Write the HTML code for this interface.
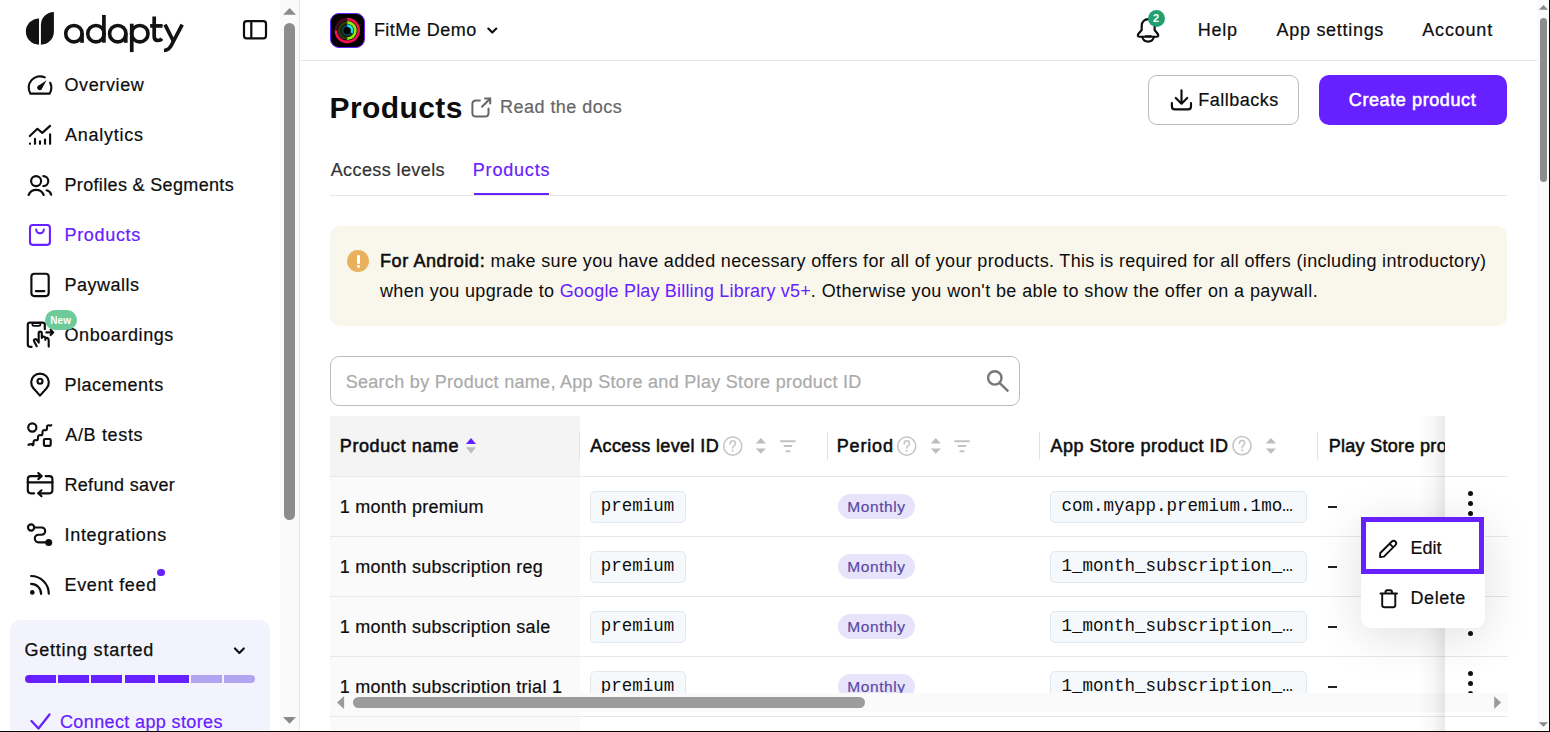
<!DOCTYPE html>
<html><head><meta charset="utf-8"><style>
html,body{margin:0;padding:0;}
body{width:1550px;height:732px;overflow:hidden;position:relative;background:#fff;font-family:"Liberation Sans",sans-serif;}
.t{position:absolute;white-space:nowrap;}
svg{position:absolute;overflow:visible;}
</style></head><body>

<div style="position:absolute;left:280px;top:0px;width:19px;height:731px;background:#fafafa;"></div>
<div style="position:absolute;left:299px;top:0px;width:1px;height:731px;background:#e6e6e6;"></div>
<div style="position:absolute;left:284px;top:23px;width:11px;height:497px;background:#8c8c8c;border-radius:5.5px;"></div>
<div style="position:absolute;left:10px;top:620px;width:260px;height:110px;background:#f3f3fd;border-radius:10px 10px 0 0;"></div>
<div style="position:absolute;left:25.2px;top:675px;width:30.5px;height:8px;background:#6720ff;border-radius:4px 0 0 4px;"></div>
<div style="position:absolute;left:58.1px;top:675px;width:30.7px;height:8px;background:#6720ff;"></div>
<div style="position:absolute;left:91.2px;top:675px;width:30.7px;height:8px;background:#6720ff;"></div>
<div style="position:absolute;left:125px;top:675px;width:29.8px;height:8px;background:#6720ff;"></div>
<div style="position:absolute;left:157.9px;top:675px;width:30.8px;height:8px;background:#6720ff;"></div>
<div style="position:absolute;left:191px;top:675px;width:30.8px;height:8px;background:#b1a5f2;"></div>
<div style="position:absolute;left:224.1px;top:675px;width:31.0px;height:8px;background:#b1a5f2;border-radius:0 4px 4px 0;"></div>
<div class="t" style="left:64.50px;top:75.56px;font-size:18px;line-height:18px;font-weight:400;color:#0d0d0d;letter-spacing:0.62px;font-family:'Liberation Sans';-webkit-text-stroke-width:0.2px;">Overview</div>
<div class="t" style="left:65.00px;top:125.56px;font-size:18px;line-height:18px;font-weight:400;color:#0d0d0d;letter-spacing:0.74px;font-family:'Liberation Sans';-webkit-text-stroke-width:0.2px;">Analytics</div>
<div class="t" style="left:64.50px;top:175.56px;font-size:18px;line-height:18px;font-weight:400;color:#0d0d0d;letter-spacing:0.34px;font-family:'Liberation Sans';-webkit-text-stroke-width:0.2px;">Profiles &amp; Segments</div>
<div class="t" style="left:64.50px;top:225.56px;font-size:18px;line-height:18px;font-weight:400;color:#6720ff;letter-spacing:0.68px;font-family:'Liberation Sans';-webkit-text-stroke-width:0.2px;">Products</div>
<div class="t" style="left:64.50px;top:275.56px;font-size:18px;line-height:18px;font-weight:400;color:#0d0d0d;letter-spacing:0.49px;font-family:'Liberation Sans';-webkit-text-stroke-width:0.2px;">Paywalls</div>
<div class="t" style="left:64.50px;top:325.56px;font-size:18px;line-height:18px;font-weight:400;color:#0d0d0d;letter-spacing:0.58px;font-family:'Liberation Sans';-webkit-text-stroke-width:0.2px;">Onboardings</div>
<div class="t" style="left:64.50px;top:375.56px;font-size:18px;line-height:18px;font-weight:400;color:#0d0d0d;letter-spacing:0.51px;font-family:'Liberation Sans';-webkit-text-stroke-width:0.2px;">Placements</div>
<div class="t" style="left:65.30px;top:425.56px;font-size:18px;line-height:18px;font-weight:400;color:#0d0d0d;letter-spacing:0.66px;font-family:'Liberation Sans';-webkit-text-stroke-width:0.2px;">A/B tests</div>
<div class="t" style="left:64.50px;top:475.56px;font-size:18px;line-height:18px;font-weight:400;color:#0d0d0d;letter-spacing:0.3px;font-family:'Liberation Sans';-webkit-text-stroke-width:0.2px;">Refund saver</div>
<div class="t" style="left:64.50px;top:525.56px;font-size:18px;line-height:18px;font-weight:400;color:#0d0d0d;letter-spacing:0.7px;font-family:'Liberation Sans';-webkit-text-stroke-width:0.2px;">Integrations</div>
<div class="t" style="left:64.50px;top:575.56px;font-size:18px;line-height:18px;font-weight:400;color:#0d0d0d;letter-spacing:0.62px;font-family:'Liberation Sans';-webkit-text-stroke-width:0.2px;">Event feed</div>
<div class="t" style="left:24.50px;top:640.86px;font-size:18px;line-height:18px;font-weight:400;color:#0d0d0d;letter-spacing:0.76px;font-family:'Liberation Sans';-webkit-text-stroke:0.25px #0d0d0d;">Getting started</div>
<div class="t" style="left:60.00px;top:713.36px;font-size:18px;line-height:18px;font-weight:400;color:#6720ff;letter-spacing:0.37px;font-family:'Liberation Sans';-webkit-text-stroke-width:0.2px;">Connect app stores</div>
<div style="position:absolute;left:45px;top:310px;width:32px;height:20px;background:#6ccb99;border-radius:10px;"></div>
<div class="t" style="left:50.20px;top:316.14px;font-size:10px;line-height:10px;font-weight:700;color:#fff;letter-spacing:0.1px;font-family:'Liberation Sans';">New</div>
<div style="position:absolute;left:157.2px;top:568.7px;width:7.6px;height:7.6px;border-radius:50%;background:#6720ff;"></div>
<div style="position:absolute;left:300px;top:60px;width:1237px;height:1px;background:#e8e8e8;"></div>
<div class="t" style="left:373.90px;top:20.86px;font-size:18px;line-height:18px;font-weight:400;color:#0d0d0d;letter-spacing:0.47px;font-family:'Liberation Sans';-webkit-text-stroke-width:0.2px;">FitMe Demo</div>
<div class="t" style="left:1197.70px;top:20.56px;font-size:18px;line-height:18px;font-weight:400;color:#0d0d0d;letter-spacing:0.73px;font-family:'Liberation Sans';-webkit-text-stroke-width:0.2px;">Help</div>
<div class="t" style="left:1276.60px;top:20.56px;font-size:18px;line-height:18px;font-weight:400;color:#0d0d0d;letter-spacing:0.7px;font-family:'Liberation Sans';-webkit-text-stroke-width:0.2px;">App settings</div>
<div class="t" style="left:1422.30px;top:20.56px;font-size:18px;line-height:18px;font-weight:400;color:#0d0d0d;letter-spacing:0.8px;font-family:'Liberation Sans';-webkit-text-stroke-width:0.2px;">Account</div>
<div style="position:absolute;left:330px;top:13px;width:33px;height:33px;border:1px solid #6720ff;border-radius:9px;background:#000;"></div>
<div style="position:absolute;left:1537px;top:0px;width:12px;height:731px;background:#fafafa;"></div>
<div style="position:absolute;left:1540px;top:18px;width:7px;height:164px;background:#8c8c8c;border-radius:3.5px;"></div>
<div style="position:absolute;left:1549px;top:0px;width:1px;height:732px;background:#000;"></div>
<div style="position:absolute;left:0px;top:731px;width:1550px;height:1px;background:#000;"></div>
<div class="t" style="left:329.50px;top:92.61px;font-size:30px;line-height:30px;font-weight:700;color:#0d0d0d;letter-spacing:0.4px;font-family:'Liberation Sans';">Products</div>
<div class="t" style="left:500.00px;top:97.76px;font-size:18px;line-height:18px;font-weight:400;color:#666;letter-spacing:0.47px;font-family:'Liberation Sans';-webkit-text-stroke-width:0.2px;">Read the docs</div>
<div style="position:absolute;left:1148px;top:75px;width:149px;height:48px;border:1px solid #bdbdbd;border-radius:9px;background:#fff;"></div>
<div class="t" style="left:1198.20px;top:90.86px;font-size:18px;line-height:18px;font-weight:400;color:#0d0d0d;letter-spacing:0.51px;font-family:'Liberation Sans';-webkit-text-stroke-width:0.2px;">Fallbacks</div>
<div style="position:absolute;left:1319px;top:75px;width:188px;height:50px;background:#6720ff;border-radius:10px;"></div>
<div class="t" style="left:1348.80px;top:90.66px;font-size:18px;line-height:18px;font-weight:400;color:#fff;letter-spacing:0.6px;font-family:'Liberation Sans';-webkit-text-stroke-width:0.55px;">Create product</div>
<div class="t" style="left:330.70px;top:160.76px;font-size:18px;line-height:18px;font-weight:400;color:#333;letter-spacing:0.4px;font-family:'Liberation Sans';-webkit-text-stroke-width:0.2px;">Access levels</div>
<div class="t" style="left:472.80px;top:160.76px;font-size:18px;line-height:18px;font-weight:400;color:#6720ff;letter-spacing:0.8px;font-family:'Liberation Sans';-webkit-text-stroke-width:0.2px;">Products</div>
<div style="position:absolute;left:330px;top:195px;width:1177px;height:1px;background:#e6e6e6;"></div>
<div style="position:absolute;left:474px;top:193px;width:75px;height:2px;background:#6720ff;"></div>
<div style="position:absolute;left:330px;top:226px;width:1177px;height:100px;background:#f9f6ec;border-radius:10px;"></div>
<div style="position:absolute;left:347.2px;top:250px;width:22px;height:22px;border-radius:50%;background:#e9b15b;"></div>
<div style="position:absolute;left:357px;top:254.5px;width:2.6000000000000227px;height:9.5px;background:#fff;border-radius:1.3px;"></div>
<div style="position:absolute;left:356.8px;top:265.3px;width:2.8px;height:2.8px;border-radius:50%;background:#fff;"></div>
<div class="t" style="left:380px;top:245.56px;font-size:18px;line-height:30px;color:#0d0d0d;letter-spacing:0.325px;white-space:normal;width:1140px;"><span style="font-size:18px;letter-spacing:0.6px;-webkit-text-stroke:0.55px #0d0d0d;">For Android:</span> make sure you have added necessary offers for all of your products. This is required for all offers (including introductory)<br>when you upgrade to <span style="color:#6720ff;letter-spacing:0.18px;">Google Play Billing Library v5+</span><span style="letter-spacing:0.39px">. Otherwise you won't be able to show the offer on a paywall.</span></div>
<div style="position:absolute;left:330px;top:356px;width:688px;height:48px;border:1px solid #bdbdbd;border-radius:9px;background:#fff;"></div>
<div class="t" style="left:345.70px;top:373.06px;font-size:18px;line-height:18px;font-weight:400;color:#aaaaaa;letter-spacing:0.3px;font-family:'Liberation Sans';-webkit-text-stroke-width:0.2px;">Search by Product name, App Store and Play Store product ID</div>
<div style="position:absolute;left:330px;top:416px;width:250px;height:60px;background:#f4f4f4;"></div>
<div style="position:absolute;left:330px;top:476px;width:250px;height:255px;background:#fafafa;"></div>
<div style="position:absolute;left:330px;top:476px;width:1178px;height:1px;background:#e8e8e8;"></div>
<div style="position:absolute;left:330px;top:536px;width:1178px;height:1px;background:#e8e8e8;"></div>
<div style="position:absolute;left:330px;top:596px;width:1178px;height:1px;background:#e8e8e8;"></div>
<div style="position:absolute;left:330px;top:656px;width:1178px;height:1px;background:#e8e8e8;"></div>
<div style="position:absolute;left:330px;top:716px;width:1178px;height:1px;background:#e8e8e8;"></div>
<div style="position:absolute;left:579px;top:432px;width:1px;height:28px;background:#e3e3e3;"></div>
<div style="position:absolute;left:827px;top:432px;width:1px;height:28px;background:#e3e3e3;"></div>
<div style="position:absolute;left:1039px;top:432px;width:1px;height:28px;background:#e3e3e3;"></div>
<div style="position:absolute;left:1317px;top:432px;width:1px;height:28px;background:#e3e3e3;"></div>
<div class="t" style="left:339.80px;top:437.06px;font-size:18px;line-height:18px;font-weight:400;color:#0d0d0d;letter-spacing:0.6px;font-family:'Liberation Sans';-webkit-text-stroke-width:0.55px;">Product name</div>
<div class="t" style="left:590.20px;top:437.06px;font-size:18px;line-height:18px;font-weight:400;color:#0d0d0d;letter-spacing:0.39px;font-family:'Liberation Sans';-webkit-text-stroke-width:0.55px;">Access level ID</div>
<div class="t" style="left:836.80px;top:437.06px;font-size:18px;line-height:18px;font-weight:400;color:#0d0d0d;letter-spacing:0.82px;font-family:'Liberation Sans';-webkit-text-stroke-width:0.55px;">Period</div>
<div class="t" style="left:1050.40px;top:437.06px;font-size:18px;line-height:18px;font-weight:400;color:#0d0d0d;letter-spacing:0.5px;font-family:'Liberation Sans';-webkit-text-stroke-width:0.55px;">App Store product ID</div>
<div style="position:absolute;left:1320px;top:420px;width:125px;height:50px;overflow:hidden;">
<div class="t" style="left:8.70px;top:17.06px;font-size:18px;line-height:18px;font-weight:400;color:#0d0d0d;letter-spacing:0.3px;font-family:'Liberation Sans';-webkit-text-stroke-width:0.55px;">Play Store product ID</div>
</div>
<div style="position:absolute;left:0;top:0;width:1550px;height:693px;overflow:hidden;">
<div class="t" style="left:339.80px;top:498.36px;font-size:18px;line-height:18px;font-weight:400;color:#0d0d0d;letter-spacing:0.26px;font-family:'Liberation Sans';-webkit-text-stroke-width:0.2px;">1 month premium</div>
<div style="position:absolute;left:590px;top:491px;width:94px;height:29.5px;border:1px solid #e3e8ef;border-radius:5px;background:#f6f9fc;"></div>
<div class="t" style="left:600.70px;top:498.49px;font-size:17.5px;line-height:17.5px;font-weight:400;color:#0d0d0d;letter-spacing:0px;font-family:'Liberation Mono';">premium</div>
<div style="position:absolute;left:837.8px;top:494px;width:77px;height:25px;border-radius:12.5px;background:#e6e3fb;"></div>
<div class="t" style="left:847.20px;top:499.08px;font-size:15.5px;line-height:15.5px;font-weight:400;color:#5a49a3;letter-spacing:0.6px;font-family:'Liberation Sans';-webkit-text-stroke-width:0.2px;">Monthly</div>
<div style="position:absolute;left:1050px;top:491px;width:255px;height:29.5px;border:1px solid #e3e8ef;border-radius:5px;background:#f6f9fc;"></div>
<div class="t" style="left:1061.60px;top:498.49px;font-size:17.5px;line-height:17.5px;font-weight:400;color:#0d0d0d;letter-spacing:0px;font-family:'Liberation Mono';">com.myapp.premium.1mo…</div>
<div style="position:absolute;left:1328.3px;top:506.3px;width:8.700000000000045px;height:1.3000000000000114px;background:#222;"></div>
<div class="t" style="left:339.80px;top:558.36px;font-size:18px;line-height:18px;font-weight:400;color:#0d0d0d;letter-spacing:0.26px;font-family:'Liberation Sans';-webkit-text-stroke-width:0.2px;">1 month subscription reg</div>
<div style="position:absolute;left:590px;top:551px;width:94px;height:29.5px;border:1px solid #e3e8ef;border-radius:5px;background:#f6f9fc;"></div>
<div class="t" style="left:600.70px;top:558.49px;font-size:17.5px;line-height:17.5px;font-weight:400;color:#0d0d0d;letter-spacing:0px;font-family:'Liberation Mono';">premium</div>
<div style="position:absolute;left:837.8px;top:554px;width:77px;height:25px;border-radius:12.5px;background:#e6e3fb;"></div>
<div class="t" style="left:847.20px;top:559.08px;font-size:15.5px;line-height:15.5px;font-weight:400;color:#5a49a3;letter-spacing:0.6px;font-family:'Liberation Sans';-webkit-text-stroke-width:0.2px;">Monthly</div>
<div style="position:absolute;left:1050px;top:551px;width:255px;height:29.5px;border:1px solid #e3e8ef;border-radius:5px;background:#f6f9fc;"></div>
<div class="t" style="left:1061.60px;top:558.49px;font-size:17.5px;line-height:17.5px;font-weight:400;color:#0d0d0d;letter-spacing:0px;font-family:'Liberation Mono';">1_month_subscription_…</div>
<div style="position:absolute;left:1328.3px;top:566.3px;width:8.700000000000045px;height:1.3000000000000682px;background:#222;"></div>
<div class="t" style="left:339.80px;top:618.36px;font-size:18px;line-height:18px;font-weight:400;color:#0d0d0d;letter-spacing:0.26px;font-family:'Liberation Sans';-webkit-text-stroke-width:0.2px;">1 month subscription sale</div>
<div style="position:absolute;left:590px;top:611px;width:94px;height:29.5px;border:1px solid #e3e8ef;border-radius:5px;background:#f6f9fc;"></div>
<div class="t" style="left:600.70px;top:618.49px;font-size:17.5px;line-height:17.5px;font-weight:400;color:#0d0d0d;letter-spacing:0px;font-family:'Liberation Mono';">premium</div>
<div style="position:absolute;left:837.8px;top:614px;width:77px;height:25px;border-radius:12.5px;background:#e6e3fb;"></div>
<div class="t" style="left:847.20px;top:619.08px;font-size:15.5px;line-height:15.5px;font-weight:400;color:#5a49a3;letter-spacing:0.6px;font-family:'Liberation Sans';-webkit-text-stroke-width:0.2px;">Monthly</div>
<div style="position:absolute;left:1050px;top:611px;width:255px;height:29.5px;border:1px solid #e3e8ef;border-radius:5px;background:#f6f9fc;"></div>
<div class="t" style="left:1061.60px;top:618.49px;font-size:17.5px;line-height:17.5px;font-weight:400;color:#0d0d0d;letter-spacing:0px;font-family:'Liberation Mono';">1_month_subscription_…</div>
<div style="position:absolute;left:1328.3px;top:626.3px;width:8.700000000000045px;height:1.3000000000000682px;background:#222;"></div>
<div class="t" style="left:339.80px;top:678.36px;font-size:18px;line-height:18px;font-weight:400;color:#0d0d0d;letter-spacing:0.26px;font-family:'Liberation Sans';-webkit-text-stroke-width:0.2px;">1 month subscription trial 1</div>
<div style="position:absolute;left:590px;top:671px;width:94px;height:29.5px;border:1px solid #e3e8ef;border-radius:5px;background:#f6f9fc;"></div>
<div class="t" style="left:600.70px;top:678.49px;font-size:17.5px;line-height:17.5px;font-weight:400;color:#0d0d0d;letter-spacing:0px;font-family:'Liberation Mono';">premium</div>
<div style="position:absolute;left:837.8px;top:674px;width:77px;height:25px;border-radius:12.5px;background:#e6e3fb;"></div>
<div class="t" style="left:847.20px;top:679.08px;font-size:15.5px;line-height:15.5px;font-weight:400;color:#5a49a3;letter-spacing:0.6px;font-family:'Liberation Sans';-webkit-text-stroke-width:0.2px;">Monthly</div>
<div style="position:absolute;left:1050px;top:671px;width:255px;height:29.5px;border:1px solid #e3e8ef;border-radius:5px;background:#f6f9fc;"></div>
<div class="t" style="left:1061.60px;top:678.49px;font-size:17.5px;line-height:17.5px;font-weight:400;color:#0d0d0d;letter-spacing:0px;font-family:'Liberation Mono';">1_month_subscription_…</div>
<div style="position:absolute;left:1328.3px;top:686.3px;width:8.700000000000045px;height:1.3000000000000682px;background:#222;"></div>
</div>
<div style="position:absolute;left:330px;top:693px;width:1178px;height:19px;background:rgba(250,250,250,0.95);"></div>
<div style="position:absolute;left:353px;top:697px;width:512px;height:11px;background:#9c9c9c;border-radius:5.5px;"></div>
<div style="position:absolute;left:1420px;top:416px;width:25px;height:315px;background:linear-gradient(to right, rgba(0,0,0,0), rgba(0,0,0,0.035) 60%, rgba(0,0,0,0.09));"></div>
<div style="position:absolute;left:1445px;top:416px;width:63px;height:315px;background:#fff;"></div>
<div style="position:absolute;left:1445px;top:476px;width:63px;height:1px;background:#e8e8e8;"></div>
<div style="position:absolute;left:1445px;top:536px;width:63px;height:1px;background:#e8e8e8;"></div>
<div style="position:absolute;left:1445px;top:596px;width:63px;height:1px;background:#e8e8e8;"></div>
<div style="position:absolute;left:1445px;top:656px;width:63px;height:1px;background:#e8e8e8;"></div>
<div style="position:absolute;left:1445px;top:716px;width:63px;height:1px;background:#e8e8e8;"></div>
<div style="position:absolute;left:0;top:0;width:1550px;height:693px;overflow:hidden;">
<div style="position:absolute;left:1467.8px;top:490.8px;width:5px;height:5px;border-radius:50%;background:#111;"></div>
<div style="position:absolute;left:1467.8px;top:500.8px;width:5px;height:5px;border-radius:50%;background:#111;"></div>
<div style="position:absolute;left:1467.8px;top:510.79999999999995px;width:5px;height:5px;border-radius:50%;background:#111;"></div>
<div style="position:absolute;left:1467.8px;top:550.8px;width:5px;height:5px;border-radius:50%;background:#111;"></div>
<div style="position:absolute;left:1467.8px;top:560.8px;width:5px;height:5px;border-radius:50%;background:#111;"></div>
<div style="position:absolute;left:1467.8px;top:570.8px;width:5px;height:5px;border-radius:50%;background:#111;"></div>
<div style="position:absolute;left:1467.8px;top:610.8px;width:5px;height:5px;border-radius:50%;background:#111;"></div>
<div style="position:absolute;left:1467.8px;top:620.8px;width:5px;height:5px;border-radius:50%;background:#111;"></div>
<div style="position:absolute;left:1467.8px;top:630.8px;width:5px;height:5px;border-radius:50%;background:#111;"></div>
<div style="position:absolute;left:1467.8px;top:670.8px;width:5px;height:5px;border-radius:50%;background:#111;"></div>
<div style="position:absolute;left:1467.8px;top:680.8px;width:5px;height:5px;border-radius:50%;background:#111;"></div>
<div style="position:absolute;left:1467.8px;top:690.8px;width:5px;height:5px;border-radius:50%;background:#111;"></div>
</div>
<div style="position:absolute;left:1445px;top:693px;width:63px;height:19px;background:#fafafa;"></div>
<div style="position:absolute;left:1361px;top:517px;width:124px;height:111px;background:#fff;border-radius:0 0 10px 10px;box-shadow:0 8px 48px rgba(0,0,0,0.13);"></div>
<div style="position:absolute;left:1361px;top:517px;width:113px;height:47px;border:5px solid #6720ff;"></div>
<div class="t" style="left:1410.50px;top:538.66px;font-size:18px;line-height:18px;font-weight:400;color:#0d0d0d;letter-spacing:0px;font-family:'Liberation Sans';-webkit-text-stroke-width:0.2px;">Edit</div>
<div class="t" style="left:1410.50px;top:589.16px;font-size:18px;line-height:18px;font-weight:400;color:#0d0d0d;letter-spacing:0.56px;font-family:'Liberation Sans';-webkit-text-stroke-width:0.2px;">Delete</div>
<svg width="1550" height="732" style="left:0;top:0;" viewBox="0 0 1550 732"><g fill="#121212"><path d="M39,18.4 V44.7 A13.15,13.15 0 0 1 39,18.4 Z"/><path d="M53.9,11.9 V31.6 A13,13 0 0 1 40.9,44.7 V24.9 A13,13 0 0 1 53.9,11.9 Z"/></g><g fill="none" stroke="#121212" stroke-width="3.6"><circle cx="73.9" cy="33.65" r="8.2"/><circle cx="95.95" cy="33.65" r="8.2"/><circle cx="117.75" cy="33.65" r="8.2"/><circle cx="139.8" cy="33.65" r="8.2"/></g><g fill="#121212"><rect x="80.2" y="33.6" width="3.7" height="9.2"/><rect x="102.05" y="14.9" width="3.7" height="27.8"/><rect x="123.9" y="33.6" width="3.7" height="9.2"/><rect x="129.9" y="23.7" width="3.7" height="28.4"/></g><g fill="none" stroke="#121212" stroke-width="3.7"><path d="M154.2,16.5 V36.5 Q154.2,40.5 158,40.5 Q160.5,40.5 162,38.8"/><path d="M150.1,25.9 H162.6"/><path d="M165,24.6 L173.6,41.5"/><path d="M182.2,24.6 L171.5,45 Q169,50.2 164,50.5"/></g><rect x="244" y="21.1" width="22" height="17.3" rx="2.6" fill="none" stroke="#0d0d0d" stroke-width="2.2"/><path d="M251.3,21.1 V38.4" stroke="#0d0d0d" stroke-width="2.2"/><path fill="none" stroke="#0d0d0d" stroke-width="2.15" stroke-linecap="round" stroke-linejoin="round" d="M44.8,77.4 A11.3,11.3 0 0 0 30.4,93.6 H49.6 A11.3,11.3 0 0 0 50.2,82.75"/><path fill="#0d0d0d" d="M46.6,80.2 L41.6,89.3 A2.45,2.45 0 0 1 38,85.95 Z"/><circle cx="39.8" cy="87.6" r="2.45" fill="#0d0d0d"/><path fill="none" stroke="#0d0d0d" stroke-width="2.15" stroke-linecap="round" stroke-linejoin="round" d="M29.8,136 L37.4,128.8 L42.3,132.9 L50.1,125.9"/><path fill="none" stroke="#0d0d0d" stroke-width="2.15" stroke-linecap="round" stroke-linejoin="round" d="M30,143.6 V143.8 M35,138.9 V143.8 M40,141.2 V143.8 M45,139.6 V143.8 M50.1,134.3 V143.8"/><g fill="none" stroke="#0d0d0d" stroke-width="2.15" stroke-linecap="round" stroke-linejoin="round"><circle cx="36.1" cy="181.1" r="5"/><path d="M43.3,176.1 A5,5 0 0 1 43.3,186.1"/><path d="M28.6,195 A8.1,8.1 0 0 1 43.7,195"/><path d="M46.6,190.3 A6.5,6.5 0 0 1 51.2,194.8"/></g><g fill="none" stroke="#6720ff" stroke-width="2.1" stroke-linecap="round" stroke-linejoin="round"><rect x="30" y="225" width="19.9" height="19.9" rx="2.8"/><path d="M36.2,229.6 A3.8,3.8 0 0 0 43.8,229.6"/></g><g fill="none" stroke="#0d0d0d" stroke-width="2.15" stroke-linecap="round" stroke-linejoin="round" stroke-width="2.2"><rect x="31.4" y="273.7" width="17.3" height="22.4" rx="3"/><path d="M35.8,291.1 H44.4"/></g><g fill="none" stroke="#0d0d0d" stroke-width="2.15" stroke-linecap="round" stroke-linejoin="round"><path d="M31.6,346.8 H30 Q27.8,346.8 27.8,344.6 V324.8 Q27.8,322.6 30,322.6 H42.6 Q44.8,322.6 44.8,324.8 V329.2"/><rect x="32.4" y="323" width="8" height="2.8" rx="1.4" stroke-width="1.8"/><path d="M36.7,346.2 L34.2,341.6 Q33.3,339.8 35,339.2 Q36.3,338.8 37.4,340.5 L38.7,342.5 V333.3 Q38.7,331.6 40.2,331.6 Q41.8,331.6 41.8,333.3 V338 M41.8,337.6 Q42.2,336.3 43.8,336.6 Q45.4,337 45.4,338.6 V339.8 M45.4,338.6 Q45.9,337.5 47.2,337.9 Q48.7,338.3 48.7,340.2 V346.6"/><path d="M46.4,332.4 H53.2 M50.6,329.8 L53.2,332.4 L50.6,335"/></g><g fill="none" stroke="#0d0d0d" stroke-width="2.15" stroke-linecap="round" stroke-linejoin="round"><path d="M40,395.6 L33.44,388.27 A8.8,8.8 0 1 1 46.56,388.27 Z"/><circle cx="40" cy="381.2" r="2.5"/></g><g fill="none" stroke="#0d0d0d" stroke-width="2.15" stroke-linecap="round" stroke-linejoin="round"><circle cx="32.3" cy="427.5" r="4.1"/><rect x="43.9" y="439" width="6.8" height="6.8" rx="1"/><path d="M28.5,444.8 Q31.5,443.3 32.5,444.9 Q33.6,446 33.5,442.5 Q33.4,439.6 36.8,440.2 Q38.1,440.3 38,437.4 Q37.9,434.6 41.3,435.2 Q42.6,435.3 42.5,432.4 Q42.4,429.6 45.8,430.2 Q47.1,430.3 47,427.4 Q46.9,424.6 49.5,425.5 Q50.5,425.8 51.3,425.2"/></g><g fill="none" stroke="#0d0d0d" stroke-width="2.15" stroke-linecap="round" stroke-linejoin="round" stroke-width="1.9"><path d="M41.5,476.1 H30.8 Q27.8,476.1 27.8,479.1 V490.3 Q27.8,493.3 30.8,493.3 H34.1"/><path d="M38.3,473.1 L41.5,476.1 L38.3,479.1"/><path d="M45.7,476.1 H49.4 Q52.4,476.1 52.4,479.1 V490.3 Q52.4,493.3 49.4,493.3 H38.3"/><path d="M41.5,490.3 L38.3,493.3 L41.5,496.3"/><path d="M27.8,482.4 H52.4"/></g><g fill="none" stroke="#0d0d0d" stroke-width="2.15" stroke-linecap="round" stroke-linejoin="round"><circle cx="31.1" cy="527.5" r="3.1"/><path d="M34.2,527.5 H41.6 A3.6,3.6 0 0 1 41.6,534.7 H38.6 A3.8,3.8 0 0 0 38.6,542.3 H47"/></g><circle cx="48.7" cy="542.4" r="3.5" fill="#0d0d0d"/><g fill="none" stroke="#0d0d0d" stroke-width="2.15" stroke-linecap="round" stroke-linejoin="round" stroke-width="2.3"><path d="M31.1,583.9 A10,10 0 0 1 41.1,593.9"/><path d="M31.1,576 A17.7,17.7 0 0 1 48.8,593.7"/></g><circle cx="32.3" cy="592.4" r="2.3" fill="#0d0d0d"/><path fill="none" stroke="#0d0d0d" stroke-width="2.15" stroke-linecap="round" stroke-linejoin="round" stroke-width="2.2" d="M235,648.5 L239.4,652.9 L243.8,648.5"/><path fill="none" stroke="#6720ff" stroke-width="2.3" stroke-linecap="round" stroke-linejoin="round" d="M31.5,721 L38.5,728.5 L49.5,714.5"/><path fill="none" stroke="#0d0d0d" stroke-width="2.15" stroke-linecap="round" stroke-linejoin="round" stroke-width="2" d="M488.3,28.6 L492.3,32.6 L496.3,28.6"/><g fill="none" stroke-width="2.6"><circle cx="347.3" cy="30.5" r="11.4" stroke="#4a0a1e"/><path d="M347.3,19.1 A11.4,11.4 0 1 1 335.9,30.5" stroke="#f2114f"/><circle cx="347.3" cy="30.5" r="8.1" stroke="#2b3a08"/><path d="M347.3,22.4 A8.1,8.1 0 0 1 347.3,38.6" stroke="#8ef000"/><circle cx="347.3" cy="30.5" r="4.9" stroke="#0a3a3e"/><path d="M347.3,25.6 A4.9,4.9 0 0 1 351.6,32.9" stroke="#21d9e6"/></g><g fill="none" stroke="#0d0d0d" stroke-width="2.15" stroke-linecap="round" stroke-linejoin="round" stroke-width="2"><path d="M1141.7,30 V25.6 A6.45,6.45 0 0 1 1154.6,25.6 V30 L1158,34.2 Q1159,36.7 1156.3,36.7 H1139.8 Q1137.1,36.7 1138.1,34.2 Z"/><path d="M1142.3,36.9 Q1143.2,41.6 1148.1,41.6 Q1153,41.6 1153.9,36.9"/></g><path fill="#0d0d0d" d="M1144.8,35.3 H1151.9 Q1151.5,37.4 1148.35,37.4 Q1145.2,37.4 1144.8,35.3 Z"/><g fill="none" stroke="#666" stroke-width="2" stroke-linecap="round"><path d="M479.9,100.4 H476 Q472.4,100.4 472.4,104 V113 Q472.4,116.6 476,116.6 H484.9 Q488.5,116.6 488.5,113 V108.6"/><path d="M482,106.8 L489.5,99.3" /><path stroke-linecap="butt" d="M484.2,98.6 H490.2 V104.3"/></g><g fill="none" stroke="#0d0d0d" stroke-width="2.15" stroke-linecap="round" stroke-linejoin="round" stroke-width="1.9"><path d="M1181.5,90.3 V103.3 M1175.8,98 L1181.5,103.7 L1187.2,98"/><path d="M1171.9,103 V106.5 Q1171.9,109.4 1174.8,109.4 H1188.1 Q1191,109.4 1191,106.5 V103"/></g><g fill="none" stroke="#777" stroke-width="2.4"><circle cx="994.8" cy="377.9" r="6.7"/><path d="M999.5,382.8 L1008.3,391.4"/></g><path fill="#6720ff" d="M465.9,444.1 L471,438 L476,444.1 Z"/><path fill="#bdbdbd" d="M465.9,447.3 L476,447.3 L471,453.5 Z"/><path fill="#bdbdbd" d="M755.8,443.4 L760.9,438 L766.0,443.4 Z M755.8,448.4 L766.0,448.4 L760.9,453.7 Z"/><path fill="#bdbdbd" d="M930.7,443.4 L935.8000000000001,438 L940.9000000000001,443.4 Z M930.7,448.4 L940.9000000000001,448.4 L935.8000000000001,453.7 Z"/><path fill="#bdbdbd" d="M1265.8,443.4 L1270.8999999999999,438 L1276.0,443.4 Z M1265.8,448.4 L1276.0,448.4 L1270.8999999999999,453.7 Z"/><path fill="none" stroke="#c2c2c2" stroke-width="2" d="M780.2,441.3 H795.6 M783.7,446.1 H792.1 M785.5,451.2 H790.3000000000001"/><path fill="none" stroke="#c2c2c2" stroke-width="2" d="M954.3,441.3 H969.6999999999999 M957.8,446.1 H966.1999999999999 M959.5999999999999,451.2 H964.4"/><circle cx="732.7" cy="446.1" r="9.1" fill="none" stroke="#c4c4c4" stroke-width="1.5"/><path fill="none" stroke="#c4c4c4" stroke-width="1.5" stroke-linecap="round" d="M730.1,443.90000000000003 Q730.1,440.8 732.7,440.8 Q735.4000000000001,440.8 735.4000000000001,443.5 Q735.4000000000001,445.3 733.6,446.3 Q732.7,446.90000000000003 732.7,448.1"/><circle cx="732.7" cy="450.70000000000005" r="1" fill="#c4c4c4"/><circle cx="906.7" cy="446.1" r="9.1" fill="none" stroke="#c4c4c4" stroke-width="1.5"/><path fill="none" stroke="#c4c4c4" stroke-width="1.5" stroke-linecap="round" d="M904.1,443.90000000000003 Q904.1,440.8 906.7,440.8 Q909.4000000000001,440.8 909.4000000000001,443.5 Q909.4000000000001,445.3 907.6,446.3 Q906.7,446.90000000000003 906.7,448.1"/><circle cx="906.7" cy="450.70000000000005" r="1" fill="#c4c4c4"/><circle cx="1242" cy="445.7" r="9.1" fill="none" stroke="#c4c4c4" stroke-width="1.5"/><path fill="none" stroke="#c4c4c4" stroke-width="1.5" stroke-linecap="round" d="M1239.4,443.5 Q1239.4,440.4 1242,440.4 Q1244.7,440.4 1244.7,443.09999999999997 Q1244.7,444.9 1242.9,445.9 Q1242,446.5 1242,447.7"/><circle cx="1242" cy="450.3" r="1" fill="#c4c4c4"/><g fill="#8a8a8a"><path d="M283.1,14.8 L289.6,8.1 L296,14.8 Z"/><path d="M283,717 L296,717 L289.5,723.8 Z"/><path d="M1538.9,9.8 L1543.5,4.9 L1548,9.8 Z"/><path d="M1538.8,722.3 L1548,722.3 L1543.4,726.7 Z"/></g><g fill="#9c9c9c"><path d="M344.1,696 L337,702.5 L344.1,709 Z"/><path d="M1494.2,696.2 L1501.1,702.5 L1494.2,708.9 Z"/></g></svg>
<div style="position:absolute;left:1147.8px;top:9.9px;width:17.4px;height:17.4px;border-radius:50%;background:#23a06f;"></div>
<div class="t" style="left:1153.00px;top:13.29px;font-size:11px;line-height:11px;font-weight:700;color:#fff;letter-spacing:0px;font-family:'Liberation Sans';">2</div>
<svg width="1550" height="732" style="left:0;top:0;" viewBox="0 0 1550 732"><g fill="none" stroke="#0d0d0d" stroke-width="1.9" stroke-linecap="round" stroke-linejoin="round"><path d="M1380,557 L1380.3,553 L1391.8,541.5 Q1393.6,539.8 1395.4,541.5 Q1397.1,543.3 1395.4,545.1 L1383.9,556.6 Z M1389.6,543.7 L1393.2,547.3"/><path d="M1380.5,593.5 H1397 M1385.5,593.5 V592 Q1385.5,590.2 1387.3,590.2 H1390.2 Q1392,590.2 1392,592 V593.5 M1382.2,593.5 V605 Q1382.2,607.2 1384.4,607.2 H1393.1 Q1395.3,607.2 1395.3,605 V593.5"/></g></svg>
</body></html>
